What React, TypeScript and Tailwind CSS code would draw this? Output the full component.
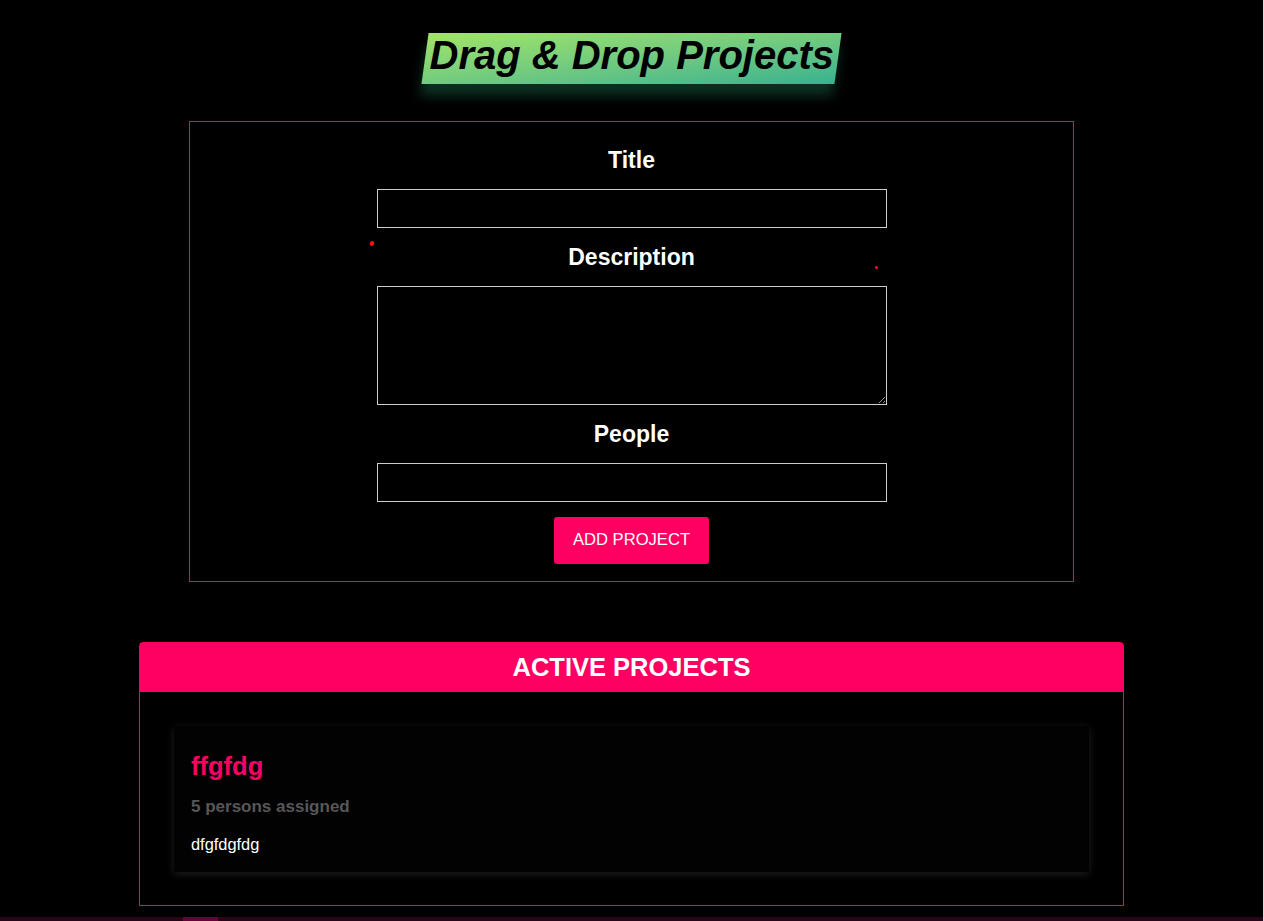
import React from 'react'

function ProjectInput() {
    return (
        <form className="relative mt-[37px] w-[885px] border border-[#ff0062] flex flex-col items-center pt-[18px] pb-[17px]">
            <span className="absolute left-[180px] top-[119px] w-[4px] h-[5px] rounded-full bg-[#ff1010] rotate-[30deg]" />
            <span className="absolute left-[685px] top-[144px] w-[3px] h-[3px] rounded-full bg-[#ff1010]" />

            <label htmlFor="title" className="text-[23px] leading-[41px] font-bold text-white mb-2">
                Title
            </label>
            <input id="title" type="text" className="w-[510px] h-[39px] bg-black border border-[#ccc] text-white outline-none mb-[9px]" />

            <label htmlFor="description" className="text-[23px] leading-[41px] font-bold text-white mb-2">
                Description
            </label>
            <textarea id="description" rows={3} className="w-[510px] h-[119px] bg-black border border-[#ccc] text-white outline-none mb-[9px] block" />

            <label htmlFor="people" className="text-[23px] leading-[41px] font-bold text-white mb-2">
                People
            </label>
            <input id="people" type="number" className="w-[510px] h-[39px] bg-black border border-[#ccc] text-white outline-none" />

            <button
                type="submit"
                className="mt-[15px] w-[155px] h-[47px] bg-[#ff0062] rounded-[3px] text-white text-[16.6px] uppercase"
            >
                Add Project
            </button>
        </form>
    )
}

function ProjectList() {
    return (
        <section className="mt-[60px] w-[985px] border border-[#ff0062] rounded-t-[4px]">
            <header className="h-[49px] bg-[#ff0062] flex items-center justify-center">
                <h2 className="text-[25.5px] font-bold text-white uppercase">Active Projects</h2>
            </header>
            <ul className="px-[34px] pt-[34px] pb-[33px]">
                <li className="bg-[#020202] shadow-[0_2px_8px_rgba(255,255,255,0.12)] px-[17px] pt-[25px] pb-[18px]">
                    <h2 className="text-[25.5px] leading-[30px] font-bold text-[#ff0062]">ffgfdg</h2>
                    <h3 className="mt-[16px] text-[17px] leading-[20px] font-bold text-[#575757]">5 persons assigned</h3>
                    <p className="mt-[17px] text-[16.4px] leading-[20px] text-white">dfgfdgfdg</p>
                </li>
            </ul>
        </section>
    )
}

export default function App() {
    return (
        <div className="min-h-screen bg-black font-['Liberation_Sans',Arial,sans-serif] flex flex-col items-center pr-px overflow-hidden">
            {/* Title */}
            <h1 className="mt-[33px] h-[51px] px-[4px] flex items-center bg-gradient-to-br from-[#a2e466] to-[#36b28f] -skew-x-[8deg] shadow-[0_12px_12px_rgba(40,160,110,0.3)]">
                <span className="skew-x-[8deg] text-[40px] font-bold italic text-black leading-none -mt-[8px]">
                    Drag &amp; Drop Projects
                </span>
            </h1>

            <ProjectInput />
            <ProjectList />

            <div className="mt-[11px] w-full h-[4px] bg-[#2a0418] flex">
                <div className="ml-[183px] w-[35px] bg-[#6a0038]" />
            </div>
            <div className="fixed right-0 top-0 h-full w-px bg-[#dcdcdc]" />
        </div>
    )
}
